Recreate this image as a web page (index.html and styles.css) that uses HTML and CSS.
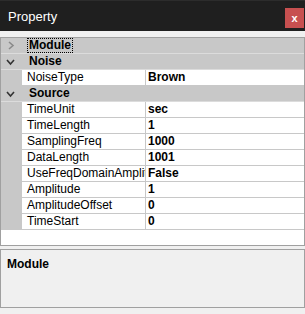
FILE: index.html
```html
<!DOCTYPE html>
<html lang="en">
<head>
  <meta charset="UTF-8">
  <title>Property</title>
  <link rel="stylesheet" href="styles.css">
</head>
<body>
  <div class="window">
    <div class="titlebar">
      <span class="title">Property</span>
      <button class="close-btn">x</button>
    </div>

    <div class="grid">
      <div class="row category">
        <span class="toggle collapsed">
          <svg width="8" height="9" viewBox="0 0 8 9"><path d="M2 1 L6 4.5 L2 8" fill="none" stroke="#8a8a8a" stroke-width="1.6"/></svg>
        </span>
        <span class="cat-name focused">Module</span>
      </div>
      <div class="row category">
        <span class="toggle">
          <svg width="9" height="8" viewBox="0 0 9 8"><path d="M1 2 L4.5 6 L8 2" fill="none" stroke="#333" stroke-width="1.6"/></svg>
        </span>
        <span class="cat-name">Noise</span>
      </div>
      <div class="row prop">
        <span class="margin"></span>
        <span class="name">NoiseType</span>
        <span class="value">Brown</span>
      </div>
      <div class="row category">
        <span class="toggle">
          <svg width="9" height="8" viewBox="0 0 9 8"><path d="M1 2 L4.5 6 L8 2" fill="none" stroke="#333" stroke-width="1.6"/></svg>
        </span>
        <span class="cat-name">Source</span>
      </div>
      <div class="row prop">
        <span class="margin"></span>
        <span class="name">TimeUnit</span>
        <span class="value">sec</span>
      </div>
      <div class="row prop">
        <span class="margin"></span>
        <span class="name">TimeLength</span>
        <span class="value">1</span>
      </div>
      <div class="row prop">
        <span class="margin"></span>
        <span class="name">SamplingFreq</span>
        <span class="value">1000</span>
      </div>
      <div class="row prop">
        <span class="margin"></span>
        <span class="name">DataLength</span>
        <span class="value">1001</span>
      </div>
      <div class="row prop">
        <span class="margin"></span>
        <span class="name">UseFreqDomainAmplitude</span>
        <span class="value">False</span>
      </div>
      <div class="row prop">
        <span class="margin"></span>
        <span class="name">Amplitude</span>
        <span class="value">1</span>
      </div>
      <div class="row prop">
        <span class="margin"></span>
        <span class="name">AmplitudeOffset</span>
        <span class="value">0</span>
      </div>
      <div class="row prop">
        <span class="margin"></span>
        <span class="name">TimeStart</span>
        <span class="value">0</span>
      </div>
    </div>

    <div class="description">
      <div class="desc-title">Module</div>
    </div>
  </div>
</body>
</html>
```

FILE: styles.css
```css
* {
  margin: 0;
  padding: 0;
  box-sizing: border-box;
}

body {
  font-family: 'Liberation Sans', Arial, sans-serif;
  font-size: 12px;
  background-color: #f0f0f0;
  color: #000;
}

.window {
  width: 305px;
  height: 314px;
  display: flex;
  flex-direction: column;
}

.titlebar {
  height: 31px;
  background-color: #1f1f1f;
  border-top: 1px solid #2c2c2c;
  display: flex;
  justify-content: space-between;
  align-items: flex-start;
}

.title {
  color: #fff;
  font-size: 13px;
  margin-left: 8px;
  margin-top: 8px;
}

.close-btn {
  width: 19px;
  height: 20px;
  margin-top: 7px;
  margin-right: 1px;
  background-color: #c75050;
  color: #fff;
  border: none;
  font-family: 'Liberation Sans', Arial, sans-serif;
  font-size: 11px;
  font-weight: bold;
  line-height: 18px;
}

.grid {
  margin-top: 6px;
  height: 209px;
  border: 1px solid #a0a0a0;
  background-color: #fff;
}

.row {
  height: 16px;
  display: flex;
  align-items: stretch;
  line-height: 15px;
}

.category {
  background-color: #c8c8c8;
  border-bottom: 1px solid #dcdcdc;
}

.toggle {
  width: 21px;
  display: flex;
  align-items: center;
  justify-content: center;
  padding-right: 2px;
}

.cat-name {
  font-weight: bold;
  margin-left: 5px;
  padding: 0 1px;
  align-self: center;
  line-height: 13px;
  border: 1px solid transparent;
}

.cat-name.focused {
  border: 1px dotted #000;
}

.prop .margin {
  width: 21px;
  background-color: #c8c8c8;
}

.prop .name {
  width: 123px;
  padding-left: 5px;
  white-space: nowrap;
  overflow: hidden;
  border-bottom: 1px solid #c8c8c8;
}

.prop .value {
  flex: 1;
  padding-left: 2px;
  font-weight: bold;
  border-left: 1px solid #c8c8c8;
  border-bottom: 1px solid #c8c8c8;
}

.description {
  margin-top: 3px;
  height: 59px;
  border: 1px solid #a0a0a0;
  background-color: #f0f0f0;
  padding: 7px 6px;
}

.desc-title {
  font-weight: bold;
}
```
